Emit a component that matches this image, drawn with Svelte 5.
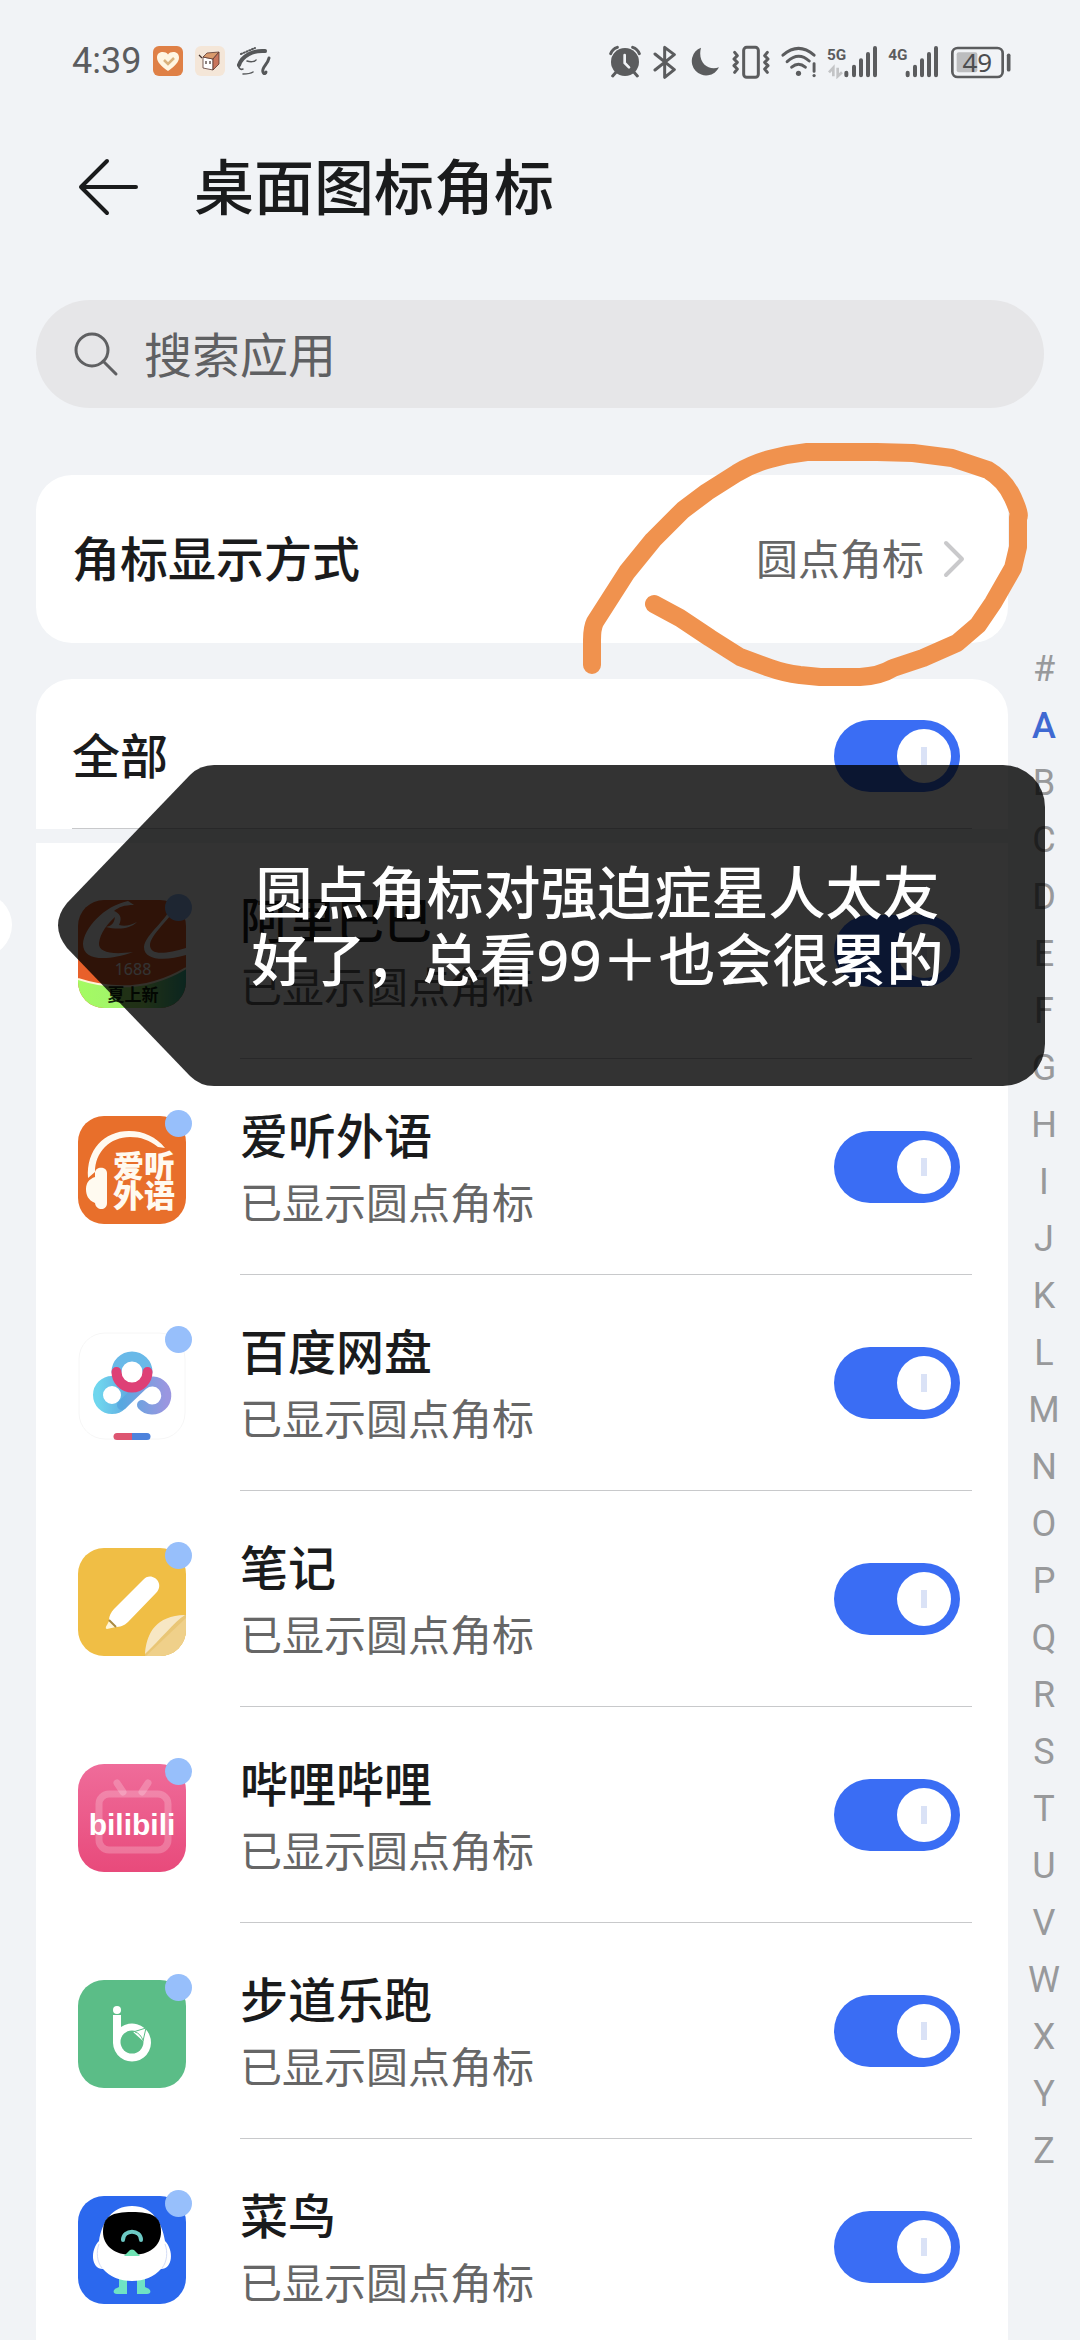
<script lang="ts">
    type App = { id: string; name: string; enabled: boolean };

    let query = $state('');
    let current = $state('A');
    let apps: App[] = $state([
        { id: 'alibaba', name: '阿里巴巴', enabled: true },
        { id: 'aiting', name: '爱听外语', enabled: true },
        { id: 'netdisk', name: '百度网盘', enabled: true },
        { id: 'notes', name: '笔记', enabled: true },
        { id: 'bilibili', name: '哔哩哔哩', enabled: true },
        { id: 'running', name: '步道乐跑', enabled: true },
        { id: 'cainiao', name: '菜鸟', enabled: true }
    ]);

    const letters = ['#', ...'ABCDEFGHIJKLMNOPQRSTUVWXYZ'];

    let allEnabled = $derived(apps.every((app) => app.enabled));

    function toggleAll() {
        const next = !allEnabled;
        for (const app of apps) app.enabled = next;
    }
</script>

{#snippet appIcon(id: string)}
    <svg class="app-icon" viewBox="0 0 108 108" aria-hidden="true">
        {#if id === 'alibaba'}
            <rect width="108" height="108" fill="#e8602a" />
            <path d="M50 1C26 6 6 28 5 44c0 16 22 18 50 8-22 3-35 0-34-9 1-10 9-20 16-26-1 7-4 9-9 10 12 3 24 2 31-5-6 3-12 5-18 3 4-8 0-12-5-14 5-4 10-6 20-6z" fill="#fff" />
            <path d="M98 4c2 8-24 28-26 40-1 12 16 10 36 4v7c-20 6-42 6-42-8C67 34 92 18 92 6z" fill="#fff" />
            <path d="M0 79Q58 98 108 68V108H0z" fill="url(#leaf)" />
            <path d="M0 79Q58 98 108 68" fill="none" stroke="#fff4d8" stroke-width="2" />
            <text x="55" y="75" text-anchor="middle" font-size="16" fill="#fff">1688</text>
            <text x="55" y="101" text-anchor="middle" font-size="17" font-weight="700" fill="#10240c">夏上新</text>
        {:else if id === 'aiting'}
            <rect width="108" height="108" fill="#e86f2b" />
            <path d="M10 62C8 34 26 15 51 15c15 0 27 6 36 17l-7-1C71 24 63 21 52 21 32 21 17 36 17 56z" fill="#fffaf0" />
            <path d="M17 57c0-7 12-7 12 0v30c0 8-11 8-12 0-7-3-9-8-9-14s3-10 9-12z" fill="#fffaf0" />
            <text class="heavy" x="66" y="61" text-anchor="middle" font-size="31" fill="#fffaf0">爱听</text>
            <text class="heavy" x="66" y="91" text-anchor="middle" font-size="31" fill="#fffaf0">外语</text>
        {:else if id === 'netdisk'}
            <rect x="1" y="1" width="106" height="106" rx="26" fill="#fff" stroke="#f6f6f6" stroke-width="1" />
            <g fill="none" stroke-width="10" stroke-linecap="round">
                <circle cx="34" cy="63" r="14" stroke="url(#cyan)" />
                <path d="M44 73L65 53A14 14 0 1 1 64 73" stroke="url(#violet)" />
                <path d="M38.500 40a15.500 15.500 0 1 1 31 0" stroke="#69b9e8" />
                <path d="M38.500 40a15.500 15.500 0 0 0 31 0" stroke="#de4076" />
            </g>
            <path d="M54 101H39a3 3 0 0 0 0 7H54z" fill="#dd5571" />
            <path d="M54 101H69a3 3 0 0 1 0 7H54z" fill="#4d82dc" />
        {:else if id === 'notes'}
            <rect width="108" height="108" fill="#f0be45" />
            <path d="M65 32c8-10 23 3 13 13L50 74c-4 4-8 5-13 5l-6-7c0-4 2-8 5-11z" fill="#fff" />
            <path d="M31 73l7 6-9 2c-2 0-1-3 0-4z" fill="#fff6d8" />
            <path d="M31 72l7 7" stroke="#a98a42" stroke-width="2" />
            <path d="M67 108C67 88 78 68 108 67V108z" fill="#e9c676" />
            <path d="M67 106C69 84 78 68 107 67 96 74 82 92 67 106z" fill="#f7e7c4" />
            <path d="M68 108L108 70V108z" fill="#efd08a" />
        {:else if id === 'bilibili'}
            <rect width="108" height="108" fill="url(#pink)" />
            <g fill="none" stroke="#fff" stroke-opacity="0.22" stroke-width="7" stroke-linecap="round">
                <rect x="21" y="30" width="69" height="56" rx="10" />
                <path d="M39 19l6 9M70 19l-6 9" />
            </g>
            <text class="logo" x="54" y="71" text-anchor="middle" font-size="30" fill="#fff">bilibili</text>
        {:else if id === 'running'}
            <rect width="108" height="108" fill="#5bbd87" />
            <circle cx="39" cy="30" r="4" fill="#fff" />
            <path d="M35 35h8v12a19 19 0 1 1-8 16z" fill="#fff" />
            <circle cx="54" cy="62" r="11.500" fill="#5bbd87" />
            <path d="M55 52l13-4-3 13" fill="#fff" stroke="#5bbd87" stroke-width="1" />
            <path d="M57 52c4 1 6 4 8 8" fill="none" stroke="#5bbd87" stroke-width="1" />
        {:else}
            <rect width="108" height="108" fill="#2b68ee" />
            <path d="M41 82h8v16H39c-5 0-4-5 0-6l2-1zM59 82h8v9l2 1c4 1 5 6 0 6H59z" fill="#6fe3c4" />
            <path d="M54 10c20 0 30 16 33 35 9 9 8 28-4 28-7 8-17 12-29 12s-22-4-29-12c-12 0-13-19-4-28 3-19 13-35 33-35z" fill="#fff" />
            <path d="M21 48c-3 8-2 18 3 24M87 48c3 8 2 18-3 24" fill="none" stroke="#d5ddf5" stroke-width="1" />
            <path d="M54 16c20 0 29 4 29 20 0 14-12 23-29 23s-29-9-29-23c0-16 9-20 29-20z" fill="#000" />
            <path d="M45 44c0-11 18-11 18 0" fill="none" stroke="#6cc9c4" stroke-width="4" stroke-linecap="round" />
            <path d="M46 60l6-6q2-1 4 0l6 6z" fill="#6fe3b4" />
        {/if}
    </svg>
{/snippet}

<svg class="defs" aria-hidden="true">
    <defs>
        <linearGradient id="leaf"><stop offset="0" stop-color="#a4fb62" /><stop offset="0.6" stop-color="#a0f070" /><stop offset="1" stop-color="#38b89a" /></linearGradient>
        <linearGradient id="cyan"><stop offset="0" stop-color="#6fd6ee" /><stop offset="1" stop-color="#62aee2" /></linearGradient>
        <linearGradient id="violet"><stop offset="0" stop-color="#58a8e0" /><stop offset="1" stop-color="#9a96e0" /></linearGradient>
        <linearGradient id="pink" x2="0" y2="1"><stop offset="0" stop-color="#ef6c9a" /><stop offset="1" stop-color="#e84a7b" /></linearGradient>
    </defs>
</svg>

<div class="page">
    <div class="status">
        <div class="status-left">
            <span class="time">4:39</span>
            <svg width="30" height="30" viewBox="0 0 30 30">
                <rect width="30" height="30" rx="6" fill="#df8046" />
                <path d="M15 25C8 20 4 16 4 11.500c0-6 8-7 11-3 3-4 11-3 11 3C26 16 22 20 15 25z" fill="#fff6e2" />
                <path d="M11 14l4 4 6-6" fill="none" stroke="#d9b27c" stroke-width="2.500" />
            </svg>
            <svg width="30" height="30" viewBox="0 0 30 30">
                <rect width="30" height="30" rx="6" fill="#f4e6d8" />
                <path d="M8 11l10 2v11l-10-2z" fill="#fff" stroke="#5a3a34" stroke-width="0.800" />
                <path d="M8 11l4-4 12-1-6 7z" fill="#d99a6c" stroke="#5a3a34" stroke-width="0.800" />
                <path d="M18 13l6-7v12l-6 6z" fill="#c9755c" stroke="#5a3a34" stroke-width="0.800" />
                <path d="M11 15v3M15 15v3M4 9l3 3" stroke="#40302c" stroke-width="1.200" />
            </svg>
            <svg width="34" height="30" viewBox="0 0 34 30">
                <g fill="none" stroke="#555759" stroke-linecap="round">
                    <path d="M2 19C5 10 16 4 28 5" stroke-width="4" />
                    <path d="M1 19c1 4 3 5 5 4M10 15c3 1 8 1 9-1M6 28c4 0 7 0 10-2" stroke-width="1.500" />
                    <path d="M32 12c-1 6-8 10-6 14 1 3 3 1 3 0" stroke-width="3" />
                    <path d="M4 8l14-6" stroke-width="2" stroke-dasharray="1 2" />
                </g>
            </svg>
        </div>
        <div class="status-right">
            <svg width="33" height="35" viewBox="57 39 99 105">
                <circle cx="105" cy="93" r="42" fill="#5b5c5e" />
                <path d="M62 68a32 32 0 0 1 20-19M148 68a32 32 0 0 0-20-19M78 124l-10 11M132 124l10 11" fill="none" stroke="#5b5c5e" stroke-width="9" stroke-linecap="round" />
                <path d="M104 72v24l13 13" fill="none" stroke="#f1f3f6" stroke-width="8" stroke-linecap="round" />
            </svg>
            <svg width="26" height="35" viewBox="186 39 78 105">
                <path d="M195 69l58 47-29 23V49l29 22-58 46" fill="none" stroke="#5b5c5e" stroke-width="9" stroke-linejoin="round" stroke-linecap="round" />
            </svg>
            <svg width="33" height="35" viewBox="294 39 99 105">
                <path d="M333 50a43 43 0 1 0 54 59c-30 12-66-12-54-59z" fill="#5b5c5e" />
            </svg>
            <svg width="40" height="35" viewBox="423 39 120 105">
                <g fill="none" stroke="#5b5c5e" stroke-width="9" stroke-linejoin="round" stroke-linecap="round">
                    <rect x="461" y="49" width="44" height="90" rx="9" />
                    <path d="M434 64l8 10-10 10 10 10-10 10 10 10-8 10M532 64l-8 10 10 10-10 10 10 10-10 10 8 10" />
                </g>
            </svg>
            <svg width="36" height="35" viewBox="570 39 111 105">
                <g fill="none" stroke="#5b5c5e" stroke-width="9" stroke-linecap="round">
                    <path d="M576 72q48-42 96 0M589 92q35-32 68 -2M603 109q21-18 42 0M672 98v24" />
                </g>
                <circle cx="624" cy="128" r="8" fill="#5b5c5e" />
                <circle cx="672" cy="135" r="5" fill="#5b5c5e" />
            </svg>
            <svg width="51" height="35" viewBox="708 39 153 105">
                <text class="network" x="708" y="86" font-size="46" fill="#5b5c5e">5G</text>
                <path d="M766 125v8M789 107v26M810 88v45M831 69v64M852 51v82" stroke="#5b5c5e" stroke-width="12" stroke-linecap="round" />
                <path d="M727 136v-26l-13 14M740 110v26l13-12" fill="none" stroke="#c3c4c6" stroke-width="8" />
            </svg>
            <svg width="53" height="35" viewBox="891 39 159 105">
                <text class="network" x="892" y="86" font-size="46" fill="#5b5c5e">4G</text>
                <path d="M950 125v8M972 107v26M993 88v45M1014 69v64M1035 51v82" stroke="#5b5c5e" stroke-width="12" stroke-linecap="round" />
            </svg>
            <svg width="60" height="35" viewBox="1080 39 180 105">
                <rect x="1097" y="64" width="62" height="60" rx="6" fill="#bcbdbf" />
                <rect x="1084" y="51" width="151" height="87" rx="16" fill="none" stroke="#5b5c5e" stroke-width="8" />
                <path d="M1253 73v43" stroke="#5b5c5e" stroke-width="11" stroke-linecap="round" />
                <text x="1159" y="122" text-anchor="middle" font-size="78" fill="#4c4d4f">49</text>
            </svg>
        </div>
    </div>

    <header>
        <button class="back" aria-label="返回">
            <svg width="60" height="60" viewBox="0 0 60 60">
                <path d="M29 4L3 30l26 26M3 30h55" fill="none" stroke="#1a1b1c" stroke-width="4" stroke-linecap="round" stroke-linejoin="round" />
            </svg>
        </button>
        <h1>桌面图标角标</h1>
    </header>

    <label class="search">
        <svg width="48" height="48" viewBox="0 0 48 48" aria-hidden="true">
            <path d="M31 31L44 44M36 20a16 16 0 1 1-32 0 16 16 0 0 1 32 0z" fill="none" stroke="#5f6062" stroke-width="3" stroke-linecap="round" />
        </svg>
        <input type="text" placeholder="搜索应用" aria-label="搜索应用" bind:value={query} />
    </label>

    <div class="content">
        <main>
            <section class="card mode">
                <span class="label">角标显示方式</span>
                <button class="mode-value">
                    圆点角标
                    <svg width="24" height="42" viewBox="0 0 24 42" aria-hidden="true">
                        <path d="M4 5l16 16L4 37" fill="none" stroke="#c9c9cb" stroke-width="4" stroke-linecap="round" stroke-linejoin="round" />
                    </svg>
                </button>
                <svg class="scribble" width="450" height="250" viewBox="580 440 450 250" aria-hidden="true">
                    <path d="M592 665v-25Q592 628 595 622L627 572 653 540 683 510 707 492 737 473Q752 464 770 459T807 452H877L913 453 952 458 988 470Q1005 480 1013 498T1018 517V547L1013 568 993 603 978 625 957 643 923 658 893 668Q880 676 860 677H820L800 675Q784 673 770 668T740 657L710 638 680 618 654 604" />
                </svg>
            </section>

            <section class="card list">
                <div class="all">
                    <label class="label" for="switch-all">全部</label>
                    <input id="switch-all" class="switch" type="checkbox" role="switch" checked={allEnabled} onchange={toggleAll} />
                </div>
                <ul>
                    {#each apps as app (app.id)}
                        <li>
                            <div class="icon-box">
                                {@render appIcon(app.id)}
                                <span class="dot"></span>
                            </div>
                            <div class="row">
                                <label for="switch-{app.id}">
                                    <span class="name">{app.name}</span>
                                    <span class="desc">已显示圆点角标</span>
                                </label>
                                <input id="switch-{app.id}" class="switch" type="checkbox" role="switch" bind:checked={app.enabled} />
                            </div>
                        </li>
                    {/each}
                </ul>

                <aside class="bubble">
                    <span class="pin"></span>
                    <svg width="160" height="321" viewBox="0 0 160 321" aria-hidden="true">
                        <path d="M160 0H156Q142 0 132 10L9 138Q-9 160 9 183L132 311Q142 321 156 321H160z" fill="#000" fill-opacity="0.8" />
                    </svg>
                    <p>圆点角标对强迫症星人太友<br />好了，总看99＋也会很累的</p>
                </aside>
            </section>
        </main>

        <nav aria-label="字母索引">
            {#each letters as letter}
                <a href="#{letter}" class:active={letter === current} onclick={() => (current = letter)}>{letter}</a>
            {/each}
        </nav>
    </div>
</div>

<style>
    :global(body) {
        margin: 0;
        background: #f1f3f6;
    }

    .page {
        position: relative;
        display: flex;
        flex-direction: column;
        height: 100vh;
        overflow: hidden;
        background: #f1f3f6;
        color: #1a1b1c;
        font-family: "Noto Sans", "Noto Sans CJK SC", sans-serif;
    }

    .defs {
        position: absolute;
        width: 0;
        height: 0;
    }

    button {
        padding: 0;
        border: none;
        background: none;
        font: inherit;
        cursor: pointer;
    }

    .status {
        flex: none;
        display: flex;
        align-items: center;
        justify-content: space-between;
        height: 122px;
        padding: 0 69px 0 72px;
    }

    .status-left {
        display: flex;
        align-items: center;
        gap: 12px;
    }

    .status-right {
        display: flex;
        align-items: center;
        gap: 10px;
    }

    .time {
        font-family: Roboto, "Noto Sans", sans-serif;
        font-size: 36px;
        line-height: 48px;
        color: #5b5c5e;
    }

    header {
        flex: none;
        display: flex;
        align-items: center;
        gap: 56px;
        height: 130px;
        padding: 0 78px;
    }

    .back,
    .mode-value {
        display: flex;
        align-items: center;
    }

    h1 {
        margin: 0;
        font-size: 60px;
        line-height: 84px;
        font-weight: 500;
    }

    .search {
        flex: none;
        display: flex;
        align-items: center;
        gap: 24px;
        height: 108px;
        margin: 48px 36px 0;
        padding: 0 36px;
        border-radius: 54px;
        box-sizing: border-box;
        background: #e6e6e8;
    }

    .search input {
        flex: 1;
        min-width: 0;
        padding: 0;
        border: none;
        outline: none;
        background: none;
        font: inherit;
        font-size: 48px;
        color: #1a1b1c;
    }

    .search input::placeholder {
        color: #5f6062;
        opacity: 1;
    }

    .content {
        display: grid;
        grid-template-columns: 1fr 72px;
        padding: 67px 0 0 36px;
    }

    main {
        display: flex;
        flex-direction: column;
        gap: 36px;
    }

    .card {
        position: relative;
        border-radius: 36px;
        background: #fff;
    }

    .label {
        font-size: 48px;
        line-height: 72px;
        font-weight: 500;
    }

    .mode {
        z-index: 1;
        display: flex;
        align-items: center;
        justify-content: space-between;
        height: 168px;
        padding: 0 42px 0 36px;
    }

    .mode-value {
        gap: 18px;
        font-size: 42px;
        line-height: 60px;
        color: #666;
    }

    .scribble {
        position: absolute;
        top: -35px;
        right: -22px;
        fill: none;
        stroke: #f0924e;
        stroke-width: 18px;
        stroke-linecap: round;
        stroke-linejoin: round;
        pointer-events: none;
    }

    .list {
        border-radius: 36px 36px 0 0;
    }

    .all {
        display: flex;
        align-items: center;
        justify-content: space-between;
        height: 144px;
        margin: 0 36px;
        padding: 5px 12px 0 0;
        border-bottom: 1px solid #c8c9cb;
    }

    ul {
        margin: 0;
        padding: 0;
        border-top: 14px solid #f1f3f6;
        list-style: none;
    }

    li {
        display: flex;
        align-items: center;
        gap: 48px;
        padding: 0 36px 0 42px;
    }

    .icon-box {
        position: relative;
        padding: 6px 6px 0 0;
    }

    .app-icon {
        display: block;
        width: 108px;
        height: 108px;
        border-radius: 26px;
        overflow: hidden;
    }

    .dot {
        position: absolute;
        top: 0;
        right: 0;
        width: 27px;
        height: 27px;
        border-radius: 50%;
        background: #97bffb;
    }

    .row {
        flex: 1;
        display: flex;
        align-items: center;
        justify-content: space-between;
        height: 215px;
        padding-right: 12px;
        border-bottom: 1px solid #c8c9cb;
    }

    .name,
    .desc {
        display: block;
    }

    .name {
        font-size: 48px;
        line-height: 72px;
        font-weight: 500;
    }

    .desc {
        font-size: 42px;
        line-height: 62px;
        color: #666;
    }

    .switch {
        flex: none;
        appearance: none;
        display: flex;
        align-items: center;
        width: 126px;
        height: 72px;
        margin: 0;
        padding: 9px;
        border-radius: 36px;
        box-sizing: border-box;
        background: #d4d5d8;
        cursor: pointer;
    }

    .switch::before {
        content: '';
        width: 54px;
        height: 54px;
        border-radius: 50%;
        background: linear-gradient(#dae2f6, #dae2f6) center / 6px 18px no-repeat #fff;
    }

    .switch:checked {
        background: #3a6df4;
    }

    .switch:checked::before {
        margin-left: auto;
    }

    .bubble {
        position: absolute;
        top: 86px;
        left: 22px;
        right: -37px;
        z-index: 2;
        display: flex;
        pointer-events: none;
    }

    .bubble svg {
        flex: none;
    }

    .bubble p {
        flex: 1;
        display: grid;
        align-content: center;
        margin: 0;
        padding-right: 68px;
        border-radius: 0 42px 42px 0;
        background: rgba(0, 0, 0, 0.8);
        font-size: 57px;
        line-height: 67px;
        font-weight: 500;
        text-align: center;
        white-space: nowrap;
        color: #fff;
    }

    .pin {
        position: absolute;
        top: 128px;
        left: -110px;
        width: 64px;
        height: 64px;
        border-radius: 50%;
        background: #fff;
    }

    nav {
        display: flex;
        flex-direction: column;
        padding-top: 166px;
    }

    nav a {
        font-family: Roboto, "Noto Sans", sans-serif;
        font-size: 36px;
        line-height: 57px;
        text-align: center;
        text-decoration: none;
        color: #98999b;
    }

    nav .active {
        font-weight: 500;
        color: #3f69d2;
    }

    .heavy {
        font-weight: 900;
    }

    .logo {
        font-family: "Liberation Sans", sans-serif;
        font-weight: 700;
    }

    .network {
        font-family: Roboto, sans-serif;
        font-weight: 700;
    }
</style>
